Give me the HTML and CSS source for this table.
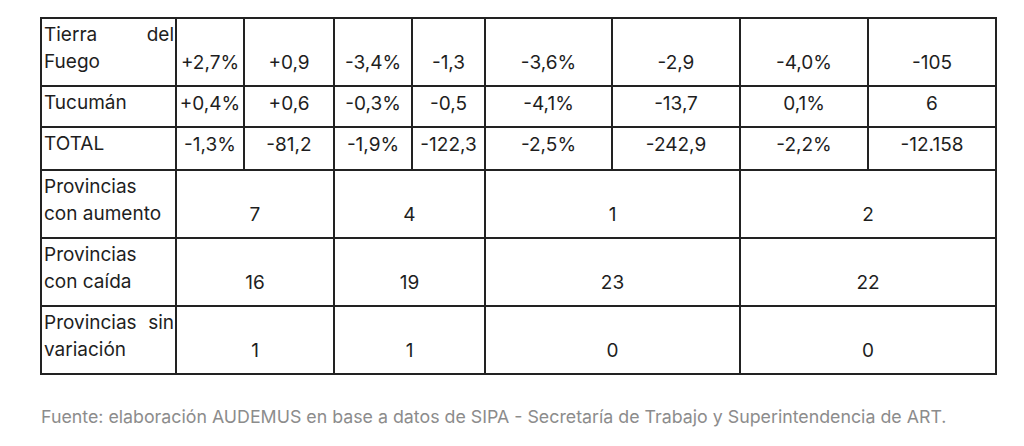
FILE: index.html
```html
<!DOCTYPE html>
<html lang="es">
<head>
<meta charset="utf-8">
<title>Tabla SIPA</title>
<link rel="stylesheet" href="styles.css">
</head>
<body>
<main class="page">
  <table class="data">
    <colgroup>
      <col class="c-name">
      <col class="c2">
      <col class="c3">
      <col class="c4">
      <col class="c5">
      <col class="c6">
      <col class="c7">
      <col class="c8">
      <col class="c9">
    </colgroup>
    <tbody>
      <tr class="r-two">
        <td class="name">Tierra del Fuego</td>
        <td>+2,7%</td><td>+0,9</td><td>-3,4%</td><td>-1,3</td>
        <td>-3,6%</td><td>-2,9</td><td>-4,0%</td><td>-105</td>
      </tr>
      <tr class="r-one">
        <td class="name">Tucumán</td>
        <td>+0,4%</td><td>+0,6</td><td>-0,3%</td><td>-0,5</td>
        <td>-4,1%</td><td>-13,7</td><td>0,1%</td><td>6</td>
      </tr>
      <tr class="r-total">
        <td class="name">TOTAL</td>
        <td>-1,3%</td><td>-81,2</td><td>-1,9%</td><td>-122,3</td>
        <td>-2,5%</td><td>-242,9</td><td>-2,2%</td><td>-12.158</td>
      </tr>
      <tr class="r-two">
        <td class="name">Provincias con aumento</td>
        <td colspan="2">7</td><td colspan="2">4</td>
        <td colspan="2">1</td><td colspan="2">2</td>
      </tr>
      <tr class="r-two">
        <td class="name">Provincias con caída</td>
        <td colspan="2">16</td><td colspan="2">19</td>
        <td colspan="2">23</td><td colspan="2">22</td>
      </tr>
      <tr class="r-two">
        <td class="name">Provincias sin variación</td>
        <td colspan="2">1</td><td colspan="2">1</td>
        <td colspan="2">0</td><td colspan="2">0</td>
      </tr>
    </tbody>
  </table>
  <p class="source">Fuente: elaboración AUDEMUS en base a datos de SIPA - Secretaría de Trabajo y Superintendencia de ART.</p>
</main>
</body>
</html>
```

FILE: styles.css
```css
html, body {
  margin: 0;
  padding: 0;
  background: #ffffff;
}

.page {
  padding: 17px 0 0 40px;
}

.data {
  border-collapse: collapse;
  table-layout: fixed;
  width: 955px;
  font-family: Inter, "Noto Sans", sans-serif;
  font-size: 19px;
  color: #1e1e1e;
}

.c-name { width: 135px; }
.c2 { width: 68px; }
.c3 { width: 90px; }
.c4 { width: 78px; }
.c5 { width: 73px; }
.c6 { width: 127px; }
.c7 { width: 128px; }
.c8 { width: 128px; }
.c9 { width: 128px; }

.data td {
  border: 2px solid #222;
  padding: 2px 1px 9px;
  line-height: 27px;
  text-align: center;
  vertical-align: bottom;
  white-space: nowrap;
  box-sizing: border-box;
}

.data td.name {
  padding-left: 2px;
  text-align: justify;
  white-space: normal;
  vertical-align: top;
}

.r-two td { height: 68px; }
.r-one td { height: 41px; }
.r-total td { height: 43px; padding-bottom: 11px; }

.source {
  margin: 31px 0 0 1px;
  font-family: Inter, "Noto Sans", sans-serif;
  font-size: 17.8px;
  color: #8c8c8c;
}
```
